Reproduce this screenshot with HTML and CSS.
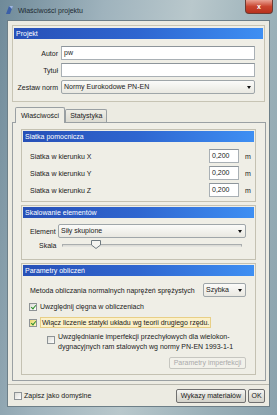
FILE: index.html
```html
<!DOCTYPE html>
<html lang="pl">
<head>
<meta charset="utf-8">
<title>Właściwości projektu</title>
<link rel="stylesheet" href="styles.css">
</head>
<body>
<div class="window">
  <div class="titlebar">
    <svg class="appicon" width="9" height="10" viewBox="0 0 9 10">
      <path d="M1 9 L4 1 L8 1 L5 9 Z" fill="#3b5fa8"/>
      <path d="M4 1 L8 1 L7 4 Z" fill="#9fb6dd"/>
    </svg>
    <span class="title">Właściwości projektu</span>
    <div class="close"><span>x</span></div>
  </div>
  <div class="client">
    <div class="group">
      <div class="hdr">Projekt</div>
      <div class="form">
        <div class="frow"><label>Autor</label><div class="input">pw</div></div>
        <div class="frow"><label>Tytuł</label><div class="input"></div></div>
        <div class="frow"><label>Zestaw norm</label><div class="select">Normy Eurokodowe PN-EN<i class="arr"></i></div></div>
      </div>
    </div>
    <div class="tabs">
      <div class="tab active">Właściwości</div>
      <div class="tab">Statystyka</div>
    </div>
    <div class="tabpanel">
      <div class="section s1">
        <div class="hdr">Siatka pomocnicza</div>
        <div class="grid">
          <div class="grow"><span class="glabel">Siatka w kierunku X</span><div class="input num">0,200</div><span class="unit">m</span></div>
          <div class="grow"><span class="glabel">Siatka w kierunku Y</span><div class="input num">0,200</div><span class="unit">m</span></div>
          <div class="grow"><span class="glabel">Siatka w kierunku Z</span><div class="input num">0,200</div><span class="unit">m</span></div>
        </div>
      </div>
      <div class="section s2">
        <div class="hdr">Skalowanie elementów</div>
        <div class="erow"><label>Element</label><div class="select">Siły skupione<i class="arr"></i></div></div>
        <div class="erow skala"><label>Skala</label>
          <div class="slider">
            <div class="track"></div>
            <svg class="thumb" width="10" height="9" viewBox="0 0 10 9">
              <path d="M0.5 0.5 H9.5 V5 L5 8.5 L0.5 5 Z" fill="#f4f4f0" stroke="#6f7a80"/>
            </svg>
          </div>
        </div>
      </div>
      <div class="section s3">
        <div class="hdr">Parametry obliczeń</div>
        <div class="mrow"><span>Metoda obliczania normalnych naprężeń sprężystych</span><div class="select small">Szybka<i class="arr"></i></div></div>
        <div class="check c1"><span class="box checked"></span><span>Uwzględnij cięgna w obliczeniach</span></div>
        <div class="check c2"><span class="box checked"></span><span class="focus">Włącz liczenie statyki układu wg teorii drugiego rzędu.</span></div>
        <div class="check c3"><span class="box"></span><span class="multi">Uwzględnianie imperfekcji przechyłowych dla wielokon-<br>dygnacyjnych ram stalowych wg normy PN-EN 1993-1-1</span></div>
        <div class="brow"><div class="btn disabled">Parametry imperfekcji</div></div>
      </div>
    </div>
    <div class="sep"></div>
    <div class="footer">
      <div class="check"><span class="box"></span><span>Zapisz jako domyślne</span></div>
      <div class="btns">
        <div class="btn">Wykazy materiałów</div>
        <div class="btn ok">OK</div>
      </div>
    </div>
  </div>
</div>
</body>
</html>
```
FILE: styles.css
```css
* { box-sizing: border-box; }
html, body { margin: 0; padding: 0; }
body {
  width: 277px; height: 415px; overflow: hidden;
  font-family: "Liberation Sans", Arial, sans-serif;
  font-size: 7px; color: #1a1a1a;
  background: #8ea2ae;
}
.window {
  width: 277px; height: 415px;
  display: flex; flex-direction: column;
  background: linear-gradient(100deg, #6f8a99 0%, #9fb3bd 30%, #b9c8cc 55%, #9ab0b8 80%, #8aa2ad 100%);
  padding: 0 7px 8px 7px;
}
.titlebar {
  height: 20px; flex: none;
  display: flex; align-items: center;
  position: relative;
}
.appicon { margin-left: -2px; margin-right: 4px; }
.title { font-size: 7px; color: #1d2a33; }
.close {
  position: absolute; right: -3px; top: 0;
  width: 28px; height: 14px;
  border: 1px solid #6b3a32; border-top: none;
  border-radius: 0 0 4px 4px;
  background: linear-gradient(#e9a394, #c9452f 50%, #b8311d 100%);
  display: flex; align-items: center; justify-content: center;
  color: #fff; font-size: 7px; font-weight: bold;
}
.client {
  flex: 1;
  background: #ecebe2;
  border: 1px solid #6d7f88;
  display: flex; flex-direction: column;
  padding: 4px 3px 0 4px;
}
.group {
  height: 77px;
  border: 1px solid #c7c4b4;
  background: #efeee6;
  padding: 2px 1px 0 1px;
  margin-right: 1px;
}
.hdr {
  height: 11px;
  background: linear-gradient(to right, #2750b7 0%, #2f66d0 50%, #3e8ff3 100%);
  color: #fff;
  padding-left: 2px;
  line-height: 11px;
  font-size: 7px;
}
.form { padding: 7px 8px 0 0; display: flex; flex-direction: column; gap: 3px; }
.frow { display: flex; align-items: center; height: 14px; }
.frow label { width: 47px; text-align: right; padding-right: 3px; }
.input {
  background: #fff;
  border: 1px solid #a9b0b5;
  border-top-color: #8d959b;
  height: 14px; line-height: 12px;
  padding-left: 2px;
  flex: 1;
}
.select {
  position: relative;
  flex: 1; height: 14px; line-height: 12px;
  border: 1px solid #9fa6a9;
  border-radius: 2px;
  background: linear-gradient(#fbfbf9, #e9e8e1);
  padding-left: 2px;
  white-space: nowrap;
}
.arr {
  position: absolute; right: 3px; top: 5px;
  width: 0; height: 0;
  border-left: 2.5px solid transparent;
  border-right: 2.5px solid transparent;
  border-top: 3px solid #111;
}
.tabs { display: flex; align-items: flex-end; height: 18px; padding-left: 3px; margin-top: 2px; position: relative; z-index: 1; }
.tab {
  height: 13px; line-height: 12px;
  border: 1px solid #9aa0a3; border-bottom: none;
  border-radius: 2px 2px 0 0;
  background: linear-gradient(#eeede6, #dcdbd2);
  padding: 0 4px;
}
.tab.active {
  height: 16px; line-height: 15px;
  background: #efeee6;
  padding: 0 5px;
  margin-bottom: -1px;
  position: relative;
}
.tabpanel {
  height: 259px;
  border: 1px solid #9aa0a3;
  background: #efeee6;
  padding: 6px 9px 0 8px;
  display: flex; flex-direction: column; gap: 3px;
}
.section {
  border: 1px solid #c4c1b2;
  background: #efeee6;
  padding: 1px 1px 0 1px;
}
.s1 { height: 73px; }
.s2 { height: 55px; }
.s3 { height: 112px; }
.grid { padding: 7px 0 0 7px; display: flex; flex-direction: column; gap: 3px; }
.grow { display: flex; align-items: center; height: 14px; }
.glabel { width: 179px; }
.input.num { flex: none; width: 30px; }
.unit { margin-left: 6px; color: #1a1a1a; }
.erow { display: flex; align-items: center; height: 14px; padding-left: 7px; margin-top: 6px; padding-right: 8px; }
.erow label { width: 28px; }
.erow.skala { margin-top: 1px; height: 12px; }
.erow.skala label { padding-left: 9px; }
.slider { position: relative; flex: 1; height: 12px; margin-right: 4px; }
.track { position: absolute; left: 4px; right: 0; top: 5px; height: 3px; border: 1px solid #a9adae; border-bottom-color: #e4e4e0; background: #dcdcd6; }
.thumb { position: absolute; left: 33px; top: 1px; }
.mrow { display: flex; align-items: center; height: 14px; padding-left: 7px; margin-top: 7px; padding-right: 8px; }
.mrow span { flex: 1; white-space: nowrap; }
.select.small { flex: none; width: 43px; }
.check { display: flex; align-items: center; height: 13px; white-space: nowrap; }
.box {
  width: 8px; height: 8px; flex: none;
  border: 1px solid #8e9396;
  background: linear-gradient(135deg, #dcdcd6, #fff);
  margin-right: 3px; position: relative;
}
.box.checked::after {
  content: ""; position: absolute; left: 2px; top: 0px;
  width: 2px; height: 4px;
  border: solid #2e8f2b; border-width: 0 1.5px 1.5px 0;
  transform: rotate(40deg);
}
.c1 { padding-left: 6px; margin-top: 3px; }
.c2 { padding-left: 6px; margin-top: 3px; }
.c2 .box { background: linear-gradient(135deg, #e7d66a, #fff6c0); }
.focus { background: #fbf0c9; border: 1px solid #e8cf86; padding: 1px 1px; }
.c3 { padding-left: 24px; margin-top: 3px; height: 22px; align-items: flex-start; }
.c3 .box { margin-top: 4px; }
.multi { line-height: 10px; }
.brow { display: flex; justify-content: flex-end; padding-right: 8px; margin-top: 3px; }
.btn {
  height: 14px; line-height: 12px;
  border: 1px solid #707070; border-radius: 2px;
  background: linear-gradient(#f6f6f4, #e2e1da 50%, #d4d3cb);
  padding: 0 4px; text-align: center;
  white-space: nowrap;
}
.btn.disabled { color: #aaa; border-color: #c6c6c0; background: #f2f1ea; width: 77px; height: 12px; line-height: 10px; padding: 0; }
.sep { height: 4px; border-bottom: 1px solid #b8b7ad; margin: 0 -3px 0 -4px; }
.footer { display: flex; align-items: center; justify-content: space-between; flex: 1; padding: 0 1px 0 2px; }
.footer .check .box { margin-right: 2px; }
.btns { display: flex; gap: 2px; }
.btn.ok { width: 17px; padding: 0; }
```
